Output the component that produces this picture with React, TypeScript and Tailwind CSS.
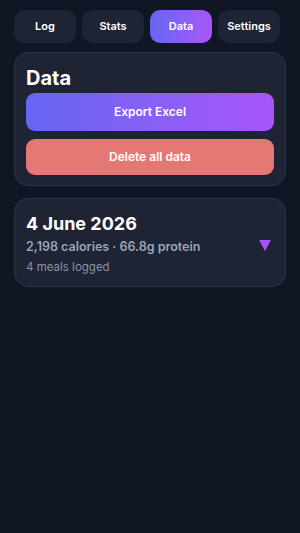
export default function App() {
  const tabs = ["Log", "Stats", "Data", "Settings"];
  const active = "Data";
  return (
    <div
      className="min-h-[533px] w-full bg-[#111625] px-[14px] pt-[10px] text-white"
      style={{ fontFamily: "Inter, 'Noto Sans', sans-serif" }}
    >
      <nav className="grid grid-cols-4 gap-[6px] pr-[6px]">
        {tabs.map((t) => (
          <button
            key={t}
            type="button"
            className={`h-[33px] rounded-[10px] text-[11px] font-semibold ${
              t === active
                ? "bg-gradient-to-r from-[#6366f1] to-[#a855f7] text-white"
                : "bg-[#1e2433] text-white"
            }`}
          >
            {t}
          </button>
        ))}
      </nav>

      <section className="mt-[9px] rounded-[14px] border border-[#2c3444] bg-[#1e2433] px-[11px] pb-[10px] pt-[11px]">
        <h2 className="text-[20px] font-bold leading-[28px]">Data</h2>
        <button
          type="button"
          className="mt-[1px] h-[38px] w-full rounded-[9px] bg-gradient-to-r from-[#6366f1] to-[#a855f7] text-[12px] font-semibold"
        >
          Export Excel
        </button>
        <button
          type="button"
          className="mt-[8px] h-[36px] w-full rounded-[9px] bg-[#e57873] text-[12px] font-semibold"
        >
          Delete all data
        </button>
      </section>

      <section className="mt-[12px] flex items-center justify-between rounded-[14px] border border-[#2c3444] bg-[#1e2433] px-[11px] pb-[11px] pt-[13px]">
        <div>
          <h3 className="text-[18px] font-bold leading-[24px]">4 June 2026</h3>
          <p className="mt-[2px] text-[12.5px] font-semibold leading-[18px] text-[#9aa3b5]">
            2,198 calories · 66.8g protein
          </p>
          <p className="mt-[3px] text-[11.5px] leading-[16px] text-[#8a93a5]">4 meals logged</p>
        </div>
        <svg width="12" height="11" viewBox="0 0 12 11" className="mr-[3px] mt-[4px]">
          <polygon points="0,0 12,0 6,11" fill="#a855f7" />
        </svg>
      </section>
    </div>
  );
}
